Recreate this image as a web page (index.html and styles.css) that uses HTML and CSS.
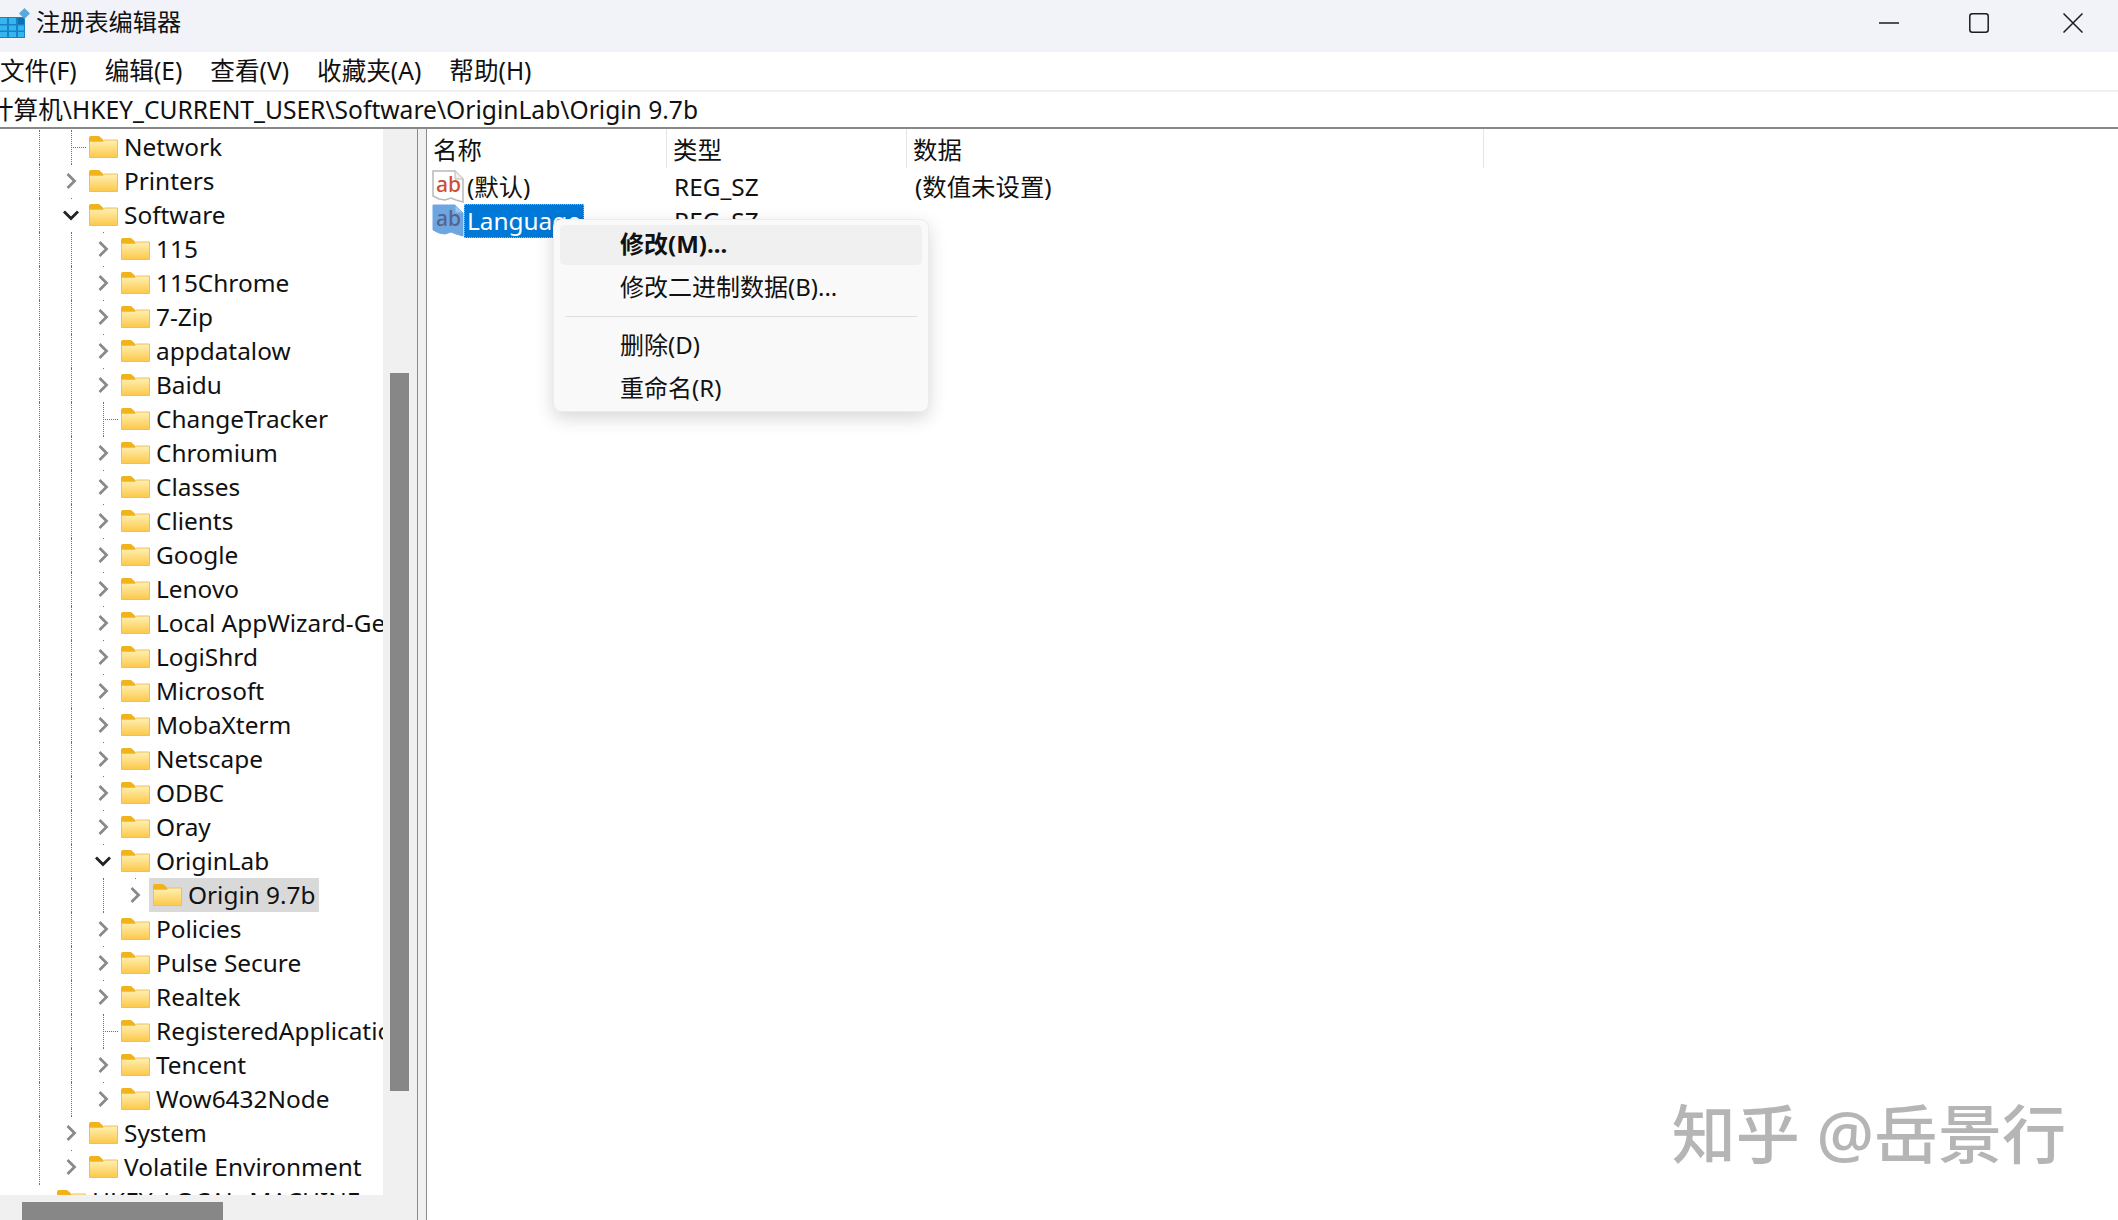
FILE: index.html
```html
<!DOCTYPE html>
<html lang="zh-CN">
<head>
<meta charset="utf-8">
<title>注册表编辑器</title>
<link rel="stylesheet" href="styles.css">
</head>
<body>
<svg class="defs" width="0" height="0" aria-hidden="true">
  <symbol id="folder" viewBox="0 0 29 22">
    <defs>
      <linearGradient id="fg" x1="0" y1="0" x2="0" y2="1">
        <stop offset="0" stop-color="#fff0b4"/>
        <stop offset="1" stop-color="#fcc94a"/>
      </linearGradient>
    </defs>
    <path d="M0 2a2 2 0 0 1 2-2h8l4.500 4v3.500H0z" fill="#f0b31a"/>
    <path d="M0.500 5.500h13.500l1.500-1.500h13v17.500h-28z" fill="url(#fg)" stroke="#eec05a"/>
  </symbol>
  <symbol id="chev-r" viewBox="0 0 12 18"><path d="M2.500 2l7 7-7 7" fill="none" stroke="#8a8a8a" stroke-width="2.800"/></symbol>
  <symbol id="chev-d" viewBox="0 0 18 12"><path d="M2 2.500l7 7 7-7" fill="none" stroke="#222" stroke-width="2.800"/></symbol>
</svg>

<div class="window">
  <header class="titlebar">
    <svg class="logo" viewBox="0 0 30 31" width="30" height="31">
      <path d="M0 9h25v21H0z" fill="#1683c9"/>
      <path d="M0 10h7v6H0zM9 10h7v6H9zM0 17.500h7v5H0zM9 17.500h7v5H9zM18 17.500h6v5h-6zM0 24h7v5H0zM9 24h7v5H9zM18 24h6v5h-6z" fill="#35b4ee"/>
      <path d="M18 10h6v6h-6z" fill="#0f6fb0"/>
      <path d="M24.500 0l5.500 5.500-5.500 5.500-5.500-5.500z" fill="#5aa9dc"/>
    </svg>
    <span class="title-text">注册表编辑器</span>
    <div class="winbtns">
      <span class="winbtn"><svg width="20" height="20" viewBox="0 0 20 20"><path d="M0 10h20" stroke="#1c1c1c" stroke-width="1.500"/></svg></span>
      <span class="winbtn"><svg width="20" height="20" viewBox="0 0 20 20"><rect x="0.800" y="0.800" width="18.400" height="18.400" rx="2.500" fill="none" stroke="#1c1c1c" stroke-width="1.500"/></svg></span>
      <span class="winbtn close"><svg width="20" height="20" viewBox="0 0 20 20"><path d="M0.500 0.500l19 19M19.500 0.500l-19 19" stroke="#1c1c1c" stroke-width="1.500"/></svg></span>
    </div>
  </header>

  <nav class="menubar">
    <span>文件(F)</span><span>编辑(E)</span><span>查看(V)</span><span>收藏夹(A)</span><span>帮助(H)</span>
  </nav>

  <div class="address"><span class="address-text">计算机\HKEY_CURRENT_USER\Software\OriginLab\Origin 9.7b</span></div>

  <main class="panes">
    <aside class="tree-pane">
      <div class="tree">
        <div class="row"><i class="ind v"></i><i class="ind leaf"></i><span class="label"><svg class="fold"><use href="#folder"/></svg>Network</span></div>
        <div class="row"><i class="ind v"></i><i class="ind tw"><svg class="cr"><use href="#chev-r"/></svg></i><span class="label"><svg class="fold"><use href="#folder"/></svg>Printers</span></div>
        <div class="row"><i class="ind v"></i><i class="ind tw"><svg class="cd"><use href="#chev-d"/></svg></i><span class="label"><svg class="fold"><use href="#folder"/></svg>Software</span></div>
        <div class="row"><i class="ind v"></i><i class="ind v"></i><i class="ind tw"><svg class="cr"><use href="#chev-r"/></svg></i><span class="label"><svg class="fold"><use href="#folder"/></svg>115</span></div>
        <div class="row"><i class="ind v"></i><i class="ind v"></i><i class="ind tw"><svg class="cr"><use href="#chev-r"/></svg></i><span class="label"><svg class="fold"><use href="#folder"/></svg>115Chrome</span></div>
        <div class="row"><i class="ind v"></i><i class="ind v"></i><i class="ind tw"><svg class="cr"><use href="#chev-r"/></svg></i><span class="label"><svg class="fold"><use href="#folder"/></svg>7-Zip</span></div>
        <div class="row"><i class="ind v"></i><i class="ind v"></i><i class="ind tw"><svg class="cr"><use href="#chev-r"/></svg></i><span class="label"><svg class="fold"><use href="#folder"/></svg>appdatalow</span></div>
        <div class="row"><i class="ind v"></i><i class="ind v"></i><i class="ind tw"><svg class="cr"><use href="#chev-r"/></svg></i><span class="label"><svg class="fold"><use href="#folder"/></svg>Baidu</span></div>
        <div class="row"><i class="ind v"></i><i class="ind v"></i><i class="ind leaf"></i><span class="label"><svg class="fold"><use href="#folder"/></svg>ChangeTracker</span></div>
        <div class="row"><i class="ind v"></i><i class="ind v"></i><i class="ind tw"><svg class="cr"><use href="#chev-r"/></svg></i><span class="label"><svg class="fold"><use href="#folder"/></svg>Chromium</span></div>
        <div class="row"><i class="ind v"></i><i class="ind v"></i><i class="ind tw"><svg class="cr"><use href="#chev-r"/></svg></i><span class="label"><svg class="fold"><use href="#folder"/></svg>Classes</span></div>
        <div class="row"><i class="ind v"></i><i class="ind v"></i><i class="ind tw"><svg class="cr"><use href="#chev-r"/></svg></i><span class="label"><svg class="fold"><use href="#folder"/></svg>Clients</span></div>
        <div class="row"><i class="ind v"></i><i class="ind v"></i><i class="ind tw"><svg class="cr"><use href="#chev-r"/></svg></i><span class="label"><svg class="fold"><use href="#folder"/></svg>Google</span></div>
        <div class="row"><i class="ind v"></i><i class="ind v"></i><i class="ind tw"><svg class="cr"><use href="#chev-r"/></svg></i><span class="label"><svg class="fold"><use href="#folder"/></svg>Lenovo</span></div>
        <div class="row"><i class="ind v"></i><i class="ind v"></i><i class="ind tw"><svg class="cr"><use href="#chev-r"/></svg></i><span class="label"><svg class="fold"><use href="#folder"/></svg>Local AppWizard-Generated Applications</span></div>
        <div class="row"><i class="ind v"></i><i class="ind v"></i><i class="ind tw"><svg class="cr"><use href="#chev-r"/></svg></i><span class="label"><svg class="fold"><use href="#folder"/></svg>LogiShrd</span></div>
        <div class="row"><i class="ind v"></i><i class="ind v"></i><i class="ind tw"><svg class="cr"><use href="#chev-r"/></svg></i><span class="label"><svg class="fold"><use href="#folder"/></svg>Microsoft</span></div>
        <div class="row"><i class="ind v"></i><i class="ind v"></i><i class="ind tw"><svg class="cr"><use href="#chev-r"/></svg></i><span class="label"><svg class="fold"><use href="#folder"/></svg>MobaXterm</span></div>
        <div class="row"><i class="ind v"></i><i class="ind v"></i><i class="ind tw"><svg class="cr"><use href="#chev-r"/></svg></i><span class="label"><svg class="fold"><use href="#folder"/></svg>Netscape</span></div>
        <div class="row"><i class="ind v"></i><i class="ind v"></i><i class="ind tw"><svg class="cr"><use href="#chev-r"/></svg></i><span class="label"><svg class="fold"><use href="#folder"/></svg>ODBC</span></div>
        <div class="row"><i class="ind v"></i><i class="ind v"></i><i class="ind tw"><svg class="cr"><use href="#chev-r"/></svg></i><span class="label"><svg class="fold"><use href="#folder"/></svg>Oray</span></div>
        <div class="row"><i class="ind v"></i><i class="ind v"></i><i class="ind tw"><svg class="cd"><use href="#chev-d"/></svg></i><span class="label"><svg class="fold"><use href="#folder"/></svg>OriginLab</span></div>
        <div class="row"><i class="ind v"></i><i class="ind v"></i><i class="ind v"></i><i class="ind tw"><svg class="cr"><use href="#chev-r"/></svg></i><span class="label selected"><svg class="fold"><use href="#folder"/></svg>Origin 9.7b</span></div>
        <div class="row"><i class="ind v"></i><i class="ind v"></i><i class="ind tw"><svg class="cr"><use href="#chev-r"/></svg></i><span class="label"><svg class="fold"><use href="#folder"/></svg>Policies</span></div>
        <div class="row"><i class="ind v"></i><i class="ind v"></i><i class="ind tw"><svg class="cr"><use href="#chev-r"/></svg></i><span class="label"><svg class="fold"><use href="#folder"/></svg>Pulse Secure</span></div>
        <div class="row"><i class="ind v"></i><i class="ind v"></i><i class="ind tw"><svg class="cr"><use href="#chev-r"/></svg></i><span class="label"><svg class="fold"><use href="#folder"/></svg>Realtek</span></div>
        <div class="row"><i class="ind v"></i><i class="ind v"></i><i class="ind leaf"></i><span class="label"><svg class="fold"><use href="#folder"/></svg>RegisteredApplications</span></div>
        <div class="row"><i class="ind v"></i><i class="ind v"></i><i class="ind tw"><svg class="cr"><use href="#chev-r"/></svg></i><span class="label"><svg class="fold"><use href="#folder"/></svg>Tencent</span></div>
        <div class="row"><i class="ind v"></i><i class="ind v"></i><i class="ind tw"><svg class="cr"><use href="#chev-r"/></svg></i><span class="label"><svg class="fold"><use href="#folder"/></svg>Wow6432Node</span></div>
        <div class="row"><i class="ind v"></i><i class="ind tw"><svg class="cr"><use href="#chev-r"/></svg></i><span class="label"><svg class="fold"><use href="#folder"/></svg>System</span></div>
        <div class="row"><i class="ind v"></i><i class="ind tw"><svg class="cr"><use href="#chev-r"/></svg></i><span class="label"><svg class="fold"><use href="#folder"/></svg>Volatile Environment</span></div>
        <div class="row"><i class="ind tw"></i><span class="label"><svg class="fold"><use href="#folder"/></svg>HKEY_LOCAL_MACHINE</span></div>
      </div>
      <div class="vscroll"><div class="vthumb"></div></div>
      <div class="hscroll"><div class="hthumb"></div></div>
    </aside>

    <div class="splitter"></div>

    <section class="list">
      <div class="list-head">
        <div class="hcell">名称</div>
        <div class="hcell">类型</div>
        <div class="hcell wide">数据</div>
      </div>
      <div class="list-row">
        <div class="cell name">
          <svg class="ab" viewBox="0 0 32 33" width="32" height="33"><path d="M1 1h22l8 8v23l-7-2-5-2-6 2-6-1-6-3z" fill="#fff" stroke="#b9b9b9" stroke-width="1.500"/><path d="M23 1v8h8" fill="#eee" stroke="#b9b9b9"/><text x="4" y="22" class="ab-text">ab</text></svg>
          <span class="name-text">(默认)</span>
        </div>
        <div class="cell type">REG_SZ</div>
        <div class="cell">(数值未设置)</div>
      </div>
      <div class="list-row">
        <div class="cell name">
          <svg class="ab ab-sel" viewBox="0 0 32 33" width="32" height="33"><path d="M1 1h22l8 8v23l-7-2-5-2-6 2-6-1-6-3z" fill="#6ea6e2" stroke="#6ea6e2"/><path d="M23 1v8h8" fill="#9fc5ec" stroke="#6ea6e2"/><text x="4" y="22" class="ab-text">ab</text></svg>
          <span class="name-text focus">Language</span>
        </div>
        <div class="cell type">REG_SZ</div>
        <div class="cell"></div>
      </div>

      <div class="ctx">
        <div class="ctx-item default">修改(M)...</div>
        <div class="ctx-item">修改二进制数据(B)...</div>
        <div class="ctx-sep"></div>
        <div class="ctx-item">删除(D)</div>
        <div class="ctx-item">重命名(R)</div>
      </div>
    </section>
  </main>

  <div class="watermark">知乎 @岳景行</div>
</div>
</body>
</html>
```

FILE: styles.css
```css
* { box-sizing: border-box; }
html, body { margin: 0; height: 100%; overflow: hidden; background: #fff; }
body {
  font-family: "Noto Sans", "Noto Sans CJK SC", sans-serif;
  font-size: 24.4px;
  color: #111;
}
.defs { position: absolute; }
.window { position: relative; display: flex; flex-direction: column; width: 2118px; height: 1220px; }

.titlebar { display: flex; align-items: center; height: 52px; background: #f1f3f9; flex: none; }
.logo { margin: 0 6px 5px 0; flex: none; }
.title-text { line-height: 1; margin-bottom: 8px; font-size: 24.2px; }
.winbtns { display: flex; margin-left: auto; align-self: flex-start; }
.winbtn { display: flex; align-items: center; justify-content: center; width: 90px; height: 46px; }
.winbtn.close { width: 94px; padding-left: 4px; }

.menubar { display: flex; gap: 28px; height: 40px; align-items: center; flex: none; border-bottom: 2px solid #f0f0f0; font-size: 24.6px; }
.menubar span { line-height: 1; }

.address { height: 37px; flex: none; border-bottom: 2px solid #888; overflow: hidden; white-space: nowrap; line-height: 36px; font-size: 24.6px; }
.address-text { display: block; margin-left: -11px; }

.panes { position: relative; display: flex; flex: 1; min-height: 0; }

.tree-pane { position: relative; width: 417px; flex: none; background: #f0f0f0; overflow: hidden; }
.tree { width: 383px; height: 1066px; background: #fff; overflow: hidden; padding: 1px 0 0 23px; }
.row { display: flex; align-items: center; height: 34px; white-space: nowrap; }
.ind { position: relative; display: flex; align-items: center; justify-content: center; flex: none; width: 32px; height: 34px; }
.ind.v::before, .ind.leaf::before, .ind.tw::before {
  content: ""; position: absolute; left: 16px; top: 0; bottom: 0; border-left: 1px dotted #707070;
}
.ind.tw::before { bottom: auto; height: 1px; }
.ind.leaf::after { content: ""; position: absolute; left: 16px; width: 15px; top: 17px; border-top: 1px dotted #707070; }
.cr { width: 12px; height: 18px; }
.cd { width: 18px; height: 12px; }
.fold { width: 29px; height: 22px; flex: none; margin-top: -1px; }
.label { display: flex; align-items: center; gap: 6px; height: 34px; margin-left: -2px; padding: 0 3px 0 4px; line-height: 32px; }
.label.selected { background: #d9d9d9; }

.vscroll { position: absolute; left: 383px; top: 0; width: 34px; height: 100%; }
.vthumb { margin: 244px 0 0 7px; width: 19px; height: 718px; background: #878787; }
.hscroll { position: absolute; left: 0; bottom: 0; width: 383px; height: 25px; }
.hthumb { margin: 7px 0 0 22px; width: 201px; height: 18px; background: #878787; }

.splitter { width: 10px; flex: none; background: #f0f0f0; border-left: 1px solid #8c8c8c; border-right: 1px solid #8c8c8c; }

.list { position: relative; flex: 1; }
.list-head { display: flex; height: 39px; }
.hcell { width: 240px; padding: 3px 0 0 6px; line-height: 36px; border-right: 1px solid #e5e5e5; }
.hcell.wide { width: 577px; }
.list-row { display: flex; height: 34px; line-height: 34px; margin-top: 2px; margin-bottom: -2px; }
.cell { width: 240px; flex: none; padding-left: 8px; white-space: nowrap; }
.cell.name { display: flex; align-items: flex-start; padding-left: 5px; gap: 0; }
.cell.type { padding-left: 7px; }
.ab { flex: none; }
.ab-text { font-family: "Noto Sans", sans-serif; font-size: 21px; font-weight: 500; fill: #cc4f3a; }
.ab-sel .ab-text { fill: #56638c; }
.name-text { padding: 0 3px; height: 34px; }
.name-text.focus { background: #0078d7; color: #fff; outline: 1px dotted #7fb8ea; outline-offset: -1px; }

.ctx {
  position: absolute; left: 126px; top: 90px; width: 376px; height: 193px; padding: 5px 6px;
  background: #f9f9f9; border: 1px solid #ececec; border-radius: 8px;
  box-shadow: 0 6px 18px rgba(0, 0, 0, .16);
  font-size: 24px;
}
.ctx-item { height: 40px; line-height: 38px; margin-bottom: 3px; padding-left: 60px; border-radius: 5px; }
.ctx-item.default { font-weight: 700; background: #f0f0f0; }
.ctx-sep { height: 1px; background: #dedede; margin: 8px 5px 9px; }

.watermark {
  position: absolute; right: 52px; bottom: 54px; line-height: 1; white-space: nowrap;
  font-size: 64px; color: #b5b5b5; font-weight: 500;
}
```
